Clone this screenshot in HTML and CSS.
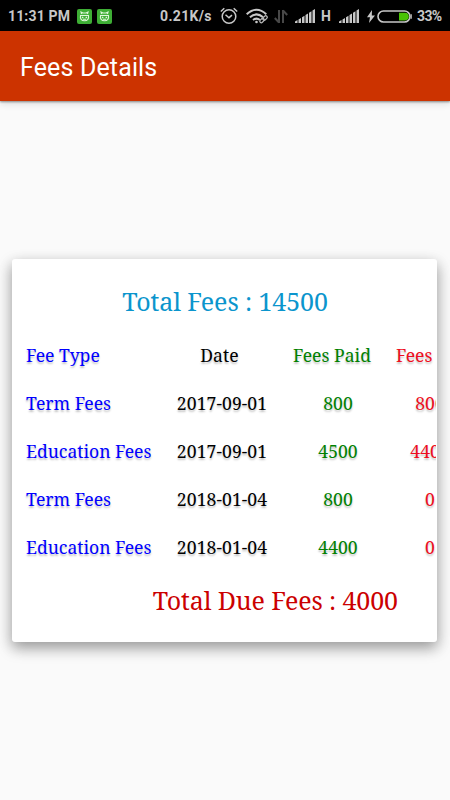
FILE: index.html
```html
<!DOCTYPE html>
<html lang="en">
<head>
<meta charset="utf-8">
<title>Fees Details</title>
<link rel="stylesheet" href="styles.css">
</head>
<body>
<div class="status">
  <span class="time">11:31 PM</span>
  <svg class="app" viewBox="0 0 15 15"><rect width="15" height="15" rx="2" fill="#3eae35"/><g fill="none" stroke="#dff5db" stroke-width="1.1"><path d="M4.500 5 4 3l2 1h3l2-1-.5 2"/><path d="M3 6.500h9"/><path d="M3.500 7c-.6 2.600 1 4.800 4 4.800s4.600-2.200 4-4.800"/><path d="M5 8l1.300 1M10 8 8.700 9M6 10.300h3"/></g></svg>
  <svg class="app" viewBox="0 0 15 15"><rect width="15" height="15" rx="2" fill="#3eae35"/><g fill="none" stroke="#dff5db" stroke-width="1.1"><path d="M4.500 5 4 3l2 1h3l2-1-.5 2"/><path d="M3 6.500h9"/><path d="M3.500 7c-.6 2.600 1 4.800 4 4.800s4.600-2.200 4-4.800"/><path d="M5 8l1.300 1M10 8 8.700 9M6 10.300h3"/></g></svg>
  <span class="speed">0.21K/s</span>
  <svg class="alarm" viewBox="0 0 18 18" fill="none" stroke="#c8c8c8" stroke-width="1.5"><circle cx="9" cy="9.500" r="6.800"/><path d="m5.500 7.700 3.500 3 3-2.500M.8 4.500 4.300 1.200M17.200 4.500l-3.500-3.300"/></svg>
  <svg class="wifi" viewBox="0 0 22 17" fill="none" stroke="#c8c8c8" stroke-width="2"><path d="M.7 6.200Q10.500-2.800 20.300 6.200M3.900 9.200q6.600-5.600 13.200 0M7 12q3.500-2.800 7 0"/><circle cx="10.500" cy="14" r="1.300" fill="#c8c8c8" stroke="none"/><path d="m14 15 7-6" stroke="#000" stroke-width="4"/><g stroke="#b8b8b8" stroke-width="1.200"><rect x="13.500" y="11" width="5" height="3" rx="1.500" transform="rotate(-45 16 12.500)"/><rect x="16.500" y="8.500" width="5" height="3" rx="1.500" transform="rotate(-45 19 10)"/></g></svg>
  <svg class="data" viewBox="0 0 14 15" fill="none" stroke="#484848" stroke-width="2"><path d="M5 1v13M5 13.500.8 9M9 14V1M9 1.500l4.200 4.500"/></svg>
  <svg class="signal s1" viewBox="0 0 20 14" fill="#c8c8c8"><path d="M0 14v-1.500l2.500-1.500v3zM3.500 10.500 6 9v5H3.500zM7 8.300l2.500-1.500V14H7zM10.500 6 13 4.500V14h-2.500zM14 3.800l2.500-1.500V14H14zM17.500 1.500 20 0v14h-2.500z"/></svg>
  <span class="net">H</span>
  <svg class="signal s2" viewBox="0 0 20 14" fill="#c8c8c8"><path d="M0 14v-1.500l2.500-1.500v3zM3.500 10.500 6 9v5H3.500zM7 8.300l2.500-1.500V14H7zM10.500 6 13 4.500V14h-2.500zM14 3.800l2.500-1.500V14H14zM17.500 1.500 20 0v14h-2.500z"/></svg>
  <svg class="bolt" viewBox="0 0 8 13" fill="#c8c8c8"><path d="M5 0 0 7.300h3L2 13l6-7.600H4.800z"/></svg>
  <svg class="battery" viewBox="0 0 35 13"><rect x="1" y="1" width="32" height="11" rx="5.500" fill="none" stroke="#c8c8c8" stroke-width="1.600"/><path d="M22 2.800h6a3.800 3.800 0 0 1 0 7.600h-6z" fill="#49c305"/><path d="M34.200 4.300v4.400" stroke="#c8c8c8" stroke-width="1.200"/></svg>
  <span class="percent">33%</span>
</div>
<header class="bar"><h1>Fees Details</h1></header>
<main>
  <section class="card">
    <h2 class="total"><span>Total Fees : 14500</span></h2>
    <div class="fees">
      <div class="row head"><span class="type">Fee Type</span><span class="date">Date</span><span class="paid">Fees Paid</span><span class="due">Fees</span></div>
      <div class="row"><span class="type">Term Fees</span><span class="date">2017-09-01</span><span class="paid">800</span><span class="due">800</span></div>
      <div class="row"><span class="type">Education Fees</span><span class="date">2017-09-01</span><span class="paid">4500</span><span class="due">4400</span></div>
      <div class="row"><span class="type">Term Fees</span><span class="date">2018-01-04</span><span class="paid">800</span><span class="due">0</span></div>
      <div class="row"><span class="type">Education Fees</span><span class="date">2018-01-04</span><span class="paid">4400</span><span class="due">0</span></div>
    </div>
    <h2 class="total-due"><span>Total Due Fees : 4000</span></h2>
  </section>
</main>
</body>
</html>
```
FILE: styles.css
```css
* { box-sizing: border-box; }
body {
  margin: 0;
  width: 450px;
  height: 800px;
  overflow: hidden;
  background: #fafafa;
  font-family: Roboto, sans-serif;
}
h1, h2 { margin: 0; font-weight: 400; }
svg { display: block; flex: none; }
.status {
  display: flex;
  align-items: center;
  height: 31px;
  padding: 1px 0 0 8px;
  background: #000;
  color: #c8c8c8;
  font-size: 14px;
  font-weight: 700;
  white-space: nowrap;
}
.status span { flex: none; }
.time { width: 69px; letter-spacing: .15px; }
.app { width: 15px; height: 15px; margin-right: 5px; }
.speed { width: 60px; margin-left: 43px; letter-spacing: .35px; }
.alarm { width: 18px; height: 18px; margin-right: 8px; }
.wifi { width: 22px; height: 17px; margin-right: 6px; }
.data { width: 14px; height: 15px; margin-right: 7px; }
.signal { width: 20px; height: 14px; }
.s1 { margin-right: 6px; }
.net { width: 17.5px; }
.s2 { margin-right: 8.5px; }
.bolt { width: 8px; height: 13px; margin-right: 2px; }
.battery { width: 35px; height: 13px; margin-right: 5px; }
.percent { font-size: 14px; letter-spacing: -.6px; }
.bar {
  display: flex;
  align-items: center;
  height: 70px;
  padding: 4px 0 0 20px;
  background: #cc3300;
  color: #fff;
  box-shadow: 0 1px 2px rgba(0,0,0,.4), 0 3px 7px rgba(0,0,0,.12);
}
.bar h1 { font-size: 25px; line-height: 30px; letter-spacing: .14px; }
main { padding: 158px 13px 0 12px; }
.card {
  height: 383px;
  overflow: hidden;
  border-radius: 3px;
  background: #fff;
  box-shadow: 0 6px 15px rgba(0,0,0,.28), 0 5px 14px rgba(0,0,0,.16);
  font-family: "Noto Serif", "Droid Serif", "DejaVu Serif Condensed", "DejaVu Serif", serif;
}
.total, .total-due { font-size: 25px; line-height: 36px; white-space: nowrap; }
.total { padding: 24px 0 0 1px; text-align: center; color: #0b95cd; letter-spacing: -.1px; }
.total-due { padding: 11px 39px 0 0; text-align: right; color: #cb0000; letter-spacing: -.1px; }
.fees {
  width: 424px;
  overflow: hidden;
  padding: 12px 0 0 14px;
  font-size: 17.6px;
}
.row {
  display: grid;
  grid-template-columns: 136px 120px 112px 72px;
  height: 48px;
  line-height: 48px;
  white-space: nowrap;
  text-align: center;
  text-shadow: 0 2px 2px rgba(0,0,0,.24);
}
.type { text-align: left; color: #00f; letter-spacing: -.03px; }
.date { color: #000; letter-spacing: .08px; }
.paid { color: #008000; }
.due { color: #ee0d20; }
.head .date { margin-left: -5px; }
.head .paid { margin-left: -12px; }
.head .due { padding-left: 2px; text-align: left; }
```
